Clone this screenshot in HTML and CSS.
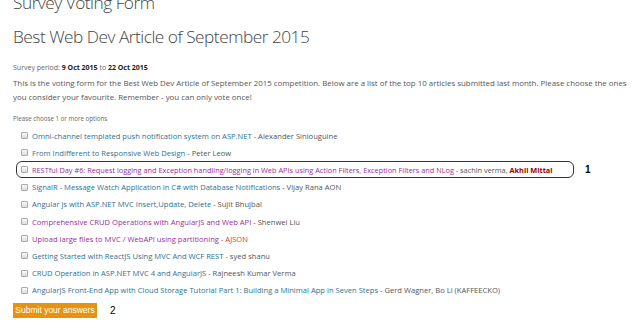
FILE: index.html
```html
<!DOCTYPE html>
<html>
<head>
<meta charset="utf-8">
<link rel="stylesheet" href="styles.css">
</head>
<body>
<div class="page">
  <h1 class="site-title">Survey Voting Form</h1>
  <h2 class="survey-title">Best Web Dev Article of September 2015</h2>
  <p class="period">Survey period: <b>9 Oct 2015</b> to <b>22 Oct 2015</b></p>
  <p class="intro">This is the voting form for the Best Web Dev Article of September 2015 competition. Below are a list of the top 10 articles submitted last month. Please choose the ones you consider your favourite. Remember - you can only vote once!</p>
  <p class="hint">Please choose 1 or more options</p>
  <ul class="options">
    <li class="option"><span class="cb"></span><span><a class="lnk">Omni-channel templated push notification system on ASP.NET</a> - Alexander Siniouguine</span></li>
    <li class="option"><span class="cb"></span><span><a class="lnk">From Indifferent to Responsive Web Design</a> - Peter Leow</span></li>
    <li class="option-wrap"><span class="option boxed"><span class="cb"></span><span><a class="lnk visited">RESTful Day #6: Request logging and Exception handling/logging in Web APIs using Action Filters, Exception Filters and NLog</a> - sachin verma, <b class="staff">Akhil Mittal</b></span></span><span class="mark">1</span></li>
    <li class="option"><span class="cb"></span><span><a class="lnk">SignalR - Message Watch Application in C# with Database Notifications</a> - Vijay Rana AON</span></li>
    <li class="option"><span class="cb"></span><span><a class="lnk">Angular js with ASP.NET MVC Insert,Update, Delete</a> - Sujit Bhujbal</span></li>
    <li class="option"><span class="cb"></span><span><a class="lnk visited">Comprehensive CRUD Operations with AngularJS and Web API</a> - Shenwei Liu</span></li>
    <li class="option"><span class="cb"></span><span><a class="lnk visited">Upload large files to MVC / WebAPI using partitioning</a> - <span class="red">AJSON</span></span></li>
    <li class="option"><span class="cb"></span><span><a class="lnk">Getting Started with ReactJS Using MVC And WCF REST</a> - syed shanu</span></li>
    <li class="option"><span class="cb"></span><span><a class="lnk">CRUD Operation in ASP.NET MVC 4 and AngularJS</a> - Rajneesh Kumar Verma</span></li>
    <li class="option"><span class="cb"></span><span><a class="lnk">AngularJS Front-End App with Cloud Storage Tutorial Part 1: Building a Minimal App in Seven Steps</a> - Gerd Wagner, Bo Li (KAFFEECKO)</span></li>
  </ul>
  <div class="actions"><button class="submit">Submit your answers</button><span class="mark2">2</span></div>
  <p class="footer">Thank you for participating in this survey</p>
</div>
</body>
</html>
```
FILE: styles.css
```css
html, body { margin: 0; padding: 0; background: #fff; }
body { font-family: "Open Sans", "DejaVu Sans", sans-serif; color: #555; overflow: hidden; }
.page { padding: 0 13px; }
.site-title {
  margin: -7px 0 0; font-size: 17.3px; font-weight: 300; letter-spacing: -0.5px; line-height: 20px; color: #444;
}
.survey-title {
  margin: 14px 0 0; font-size: 17.3px; font-weight: 300; letter-spacing: -0.5px; line-height: 20px; color: #444;
}
.period { margin: 16px 0 0; font-size: 7px; line-height: 10px; color: #666; }
.period b { color: #222; }
.intro { margin: 3px 0 0; width: 618px; font-size: 7.9px; line-height: 14px; color: #555; }
.hint { margin: 10px 0 0; font-size: 6.2px; line-height: 10px; color: #666; }
.options { list-style: none; margin: 3px 0 0; padding: 0 0 0 8px; }
.option { display: flex; align-items: center; gap: 4px; height: 17.2px; font-size: 7.6px; color: #555; white-space: nowrap; }
.option-wrap { display: flex; align-items: center; height: 17.2px; margin-left: -5px; }
.boxed { box-sizing: border-box; width: 558px; height: 17px; border: 1px solid #333; border-radius: 6px; padding-left: 4px; font-size: 7.35px; }
.cb { width: 5px; height: 5px; border: 1px solid #aaa; border-radius: 1px; background: linear-gradient(#fafafa, #dcdcdc); flex: none; }
.lnk { color: #2b7291; text-decoration: none; }
.lnk.visited { color: #962f96; }
.staff { color: #990000; }
.red { color: #d4393a; }
.mark { margin-left: 11px; font-family: "Liberation Sans", Arial, sans-serif; font-weight: bold; font-size: 10px; color: #000; }
.actions { display: flex; align-items: center; margin-top: 4px; }
.submit {
  box-sizing: border-box; width: 84px; height: 15px; padding: 0; border: none; white-space: nowrap;
  background: #e8930f; color: #fff; font-family: "Liberation Sans", Arial, sans-serif; font-size: 8.5px;
}
.mark2 { margin-left: 13px; font-family: "Liberation Sans", Arial, sans-serif; font-size: 10px; color: #000; }
.footer { margin: 2px 0 0; text-align: center; font-size: 8px; color: #bbb; }
```
